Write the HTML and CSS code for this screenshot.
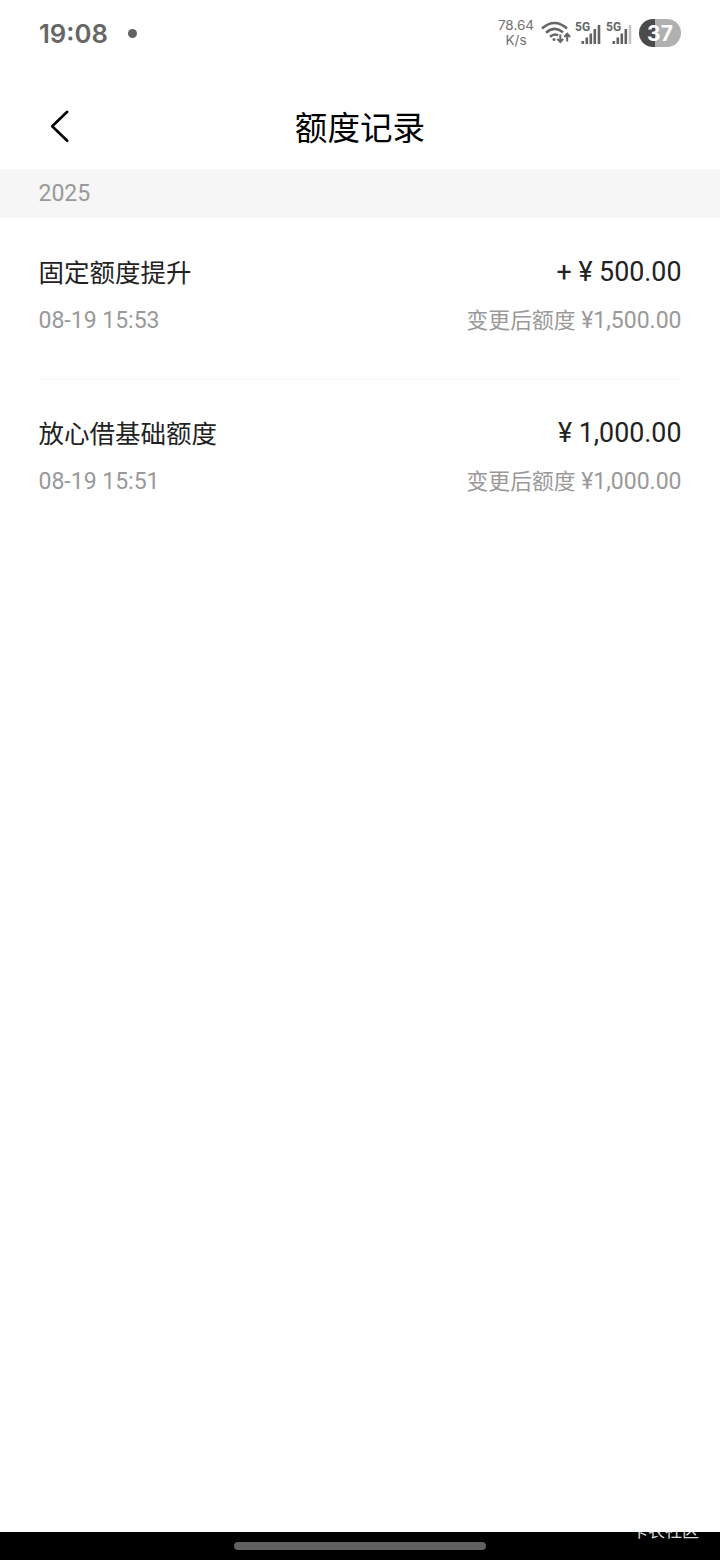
FILE: index.html
```html
<!DOCTYPE html>
<html lang="zh-CN">
<head>
<meta charset="utf-8">
<title>额度记录</title>
<link rel="stylesheet" href="styles.css">
</head>
<body>
<div class="screen">
  <header class="status">
    <time class="clock">19:08</time>
    <span class="dot"></span>
    <div class="speed"><span>78.64</span><span class="unit">K/s</span></div>
    <svg class="wifi" width="30" height="26" viewBox="0 0 30 26" fill="none" stroke="#666" stroke-width="2.5">
      <path d="M1 7.5Q13.5 -3.5 26 7.5M5 11.7Q13.5 4.3 22 11.2M9 15.8Q13.5 11.8 17 14.5"/>
      <circle cx="13" cy="18.6" r="1.5" fill="#666" stroke="none"/>
      <path stroke-width="2" d="M19.3 13.5V20.7M16.4 17.9L19.3 21L22.2 17.9M26.2 20.5V13M23.3 16L26.2 12.8L29.1 16"/>
    </svg>
    <div class="cell">
      <span class="net">5G</span>
      <svg width="26" height="26" viewBox="0 0 26 26" fill="#626262"><rect x="6.5" y="20" width="2.6" height="3"/><rect x="10.5" y="16.5" width="2.6" height="6.5"/><rect x="14.5" y="12.5" width="2.6" height="10.5"/><rect x="18.5" y="8" width="2.6" height="15"/><rect x="22.7" y="4" width="2.6" height="19"/></svg>
    </div>
    <div class="cell second">
      <span class="net">5G</span>
      <svg width="26" height="26" viewBox="0 0 26 26" fill="#626262"><rect x="6.5" y="20" width="2.6" height="3"/><rect x="10.5" y="16.5" width="2.6" height="6.5"/><rect x="14.5" y="12.5" width="2.6" height="10.5"/><rect x="18.5" y="8" width="2.6" height="15"/><rect x="22.7" y="4" width="2.6" height="19" fill="#c4c4c4"/></svg>
    </div>
    <div class="battery">37</div>
  </header>
  <nav class="nav">
    <svg class="back" width="24" height="36" viewBox="0 0 24 36" fill="none" stroke="#000" stroke-width="2.6" stroke-linecap="round" stroke-linejoin="round"><path d="M19.2 3.8L4.2 18.3L19.2 32.8"/></svg>
    <h1 class="title">额度记录</h1>
  </nav>
  <div class="year">2025</div>
  <main class="list">
    <section class="item">
      <div class="row main"><span class="name">固定额度提升</span><span class="amount">+ ¥ 500.00</span></div>
      <div class="row sub"><span>08-19 15:53</span><span><span class="label">变更后额度</span> ¥1,500.00</span></div>
    </section>
    <section class="item">
      <div class="row main"><span class="name">放心借基础额度</span><span class="amount">¥ 1,000.00</span></div>
      <div class="row sub"><span>08-19 15:51</span><span><span class="label">变更后额度</span> ¥1,000.00</span></div>
    </section>
  </main>
  <footer class="gesture"><span class="handle"></span><span class="mark">卡农社区</span></footer>
</div>
</body>
</html>
```
FILE: styles.css
```css
* { box-sizing: border-box; }
body { margin: 0; background: #fff; font-family: Roboto, "Noto Sans CJK SC", sans-serif; }
.screen { width: 720px; height: 1560px; display: flex; flex-direction: column; }
.status { height: 84px; padding: 0 39px; display: flex; align-items: flex-start; color: #666; }
.clock { width: 69px; margin-top: 18px; font: 600 25.7px/32px Inter, sans-serif; }
.dot { width: 9px; height: 9px; margin: 29px 0 0 20px; border-radius: 50%; background: #626262; }
.speed { width: 38px; margin: 18px 6px 0 auto; display: flex; flex-direction: column; align-items: center; font: 13.5px/15px Inter, sans-serif; color: #707070; }
.wifi { margin: 21px 4px 0 0; }
.cell { position: relative; width: 26px; height: 26px; margin-top: 21px; }
.second { margin-left: 5px; }
.net { position: absolute; left: 0; top: 0; font: 700 12px/13px Roboto, sans-serif; }
.battery { width: 42px; height: 28px; margin: 19px 0 0 7px; border-radius: 14px; background: linear-gradient(90deg, #4b4b4b 37%, #b0b0b0 37%); color: #fff; font: 700 21px/29px Inter, sans-serif; text-align: center; }
.nav { height: 85px; display: flex; justify-content: center; align-items: center; position: relative; }
.back { position: absolute; left: 48px; top: 24px; }
.title { margin: 0; padding-top: 4px; font-size: 32.6px; line-height: 48px; font-weight: 400; color: #000; }
.year { height: 49px; padding-left: 38.5px; background: #f6f6f6; color: #999; font-size: 23px; line-height: 49px; }
.list { flex: 1; padding: 0 38.5px; }
.item { height: 161px; padding-top: 35px; }
.item + .item { padding-top: 34px; border-top: 1px solid #f5f5f5; }
.row { display: flex; justify-content: space-between; }
.main { height: 38px; line-height: 38px; font-size: 25.5px; color: #222; }
.name { padding-top: 1px; }
.amount { font-size: 26.8px; }
.sub { height: 32px; margin-top: 13px; line-height: 33px; font-size: 23px; color: #999; }
.label { font-size: 21.8px; }
.gesture { position: relative; height: 28px; padding-top: 10px; display: flex; justify-content: center; background: #000; }
.handle { width: 252px; height: 8px; border-radius: 4px; background: #606060; }
.mark { position: absolute; right: 21px; top: -11px; font-size: 17px; line-height: 20px; color: rgba(255, 255, 255, 0.87); }
```
